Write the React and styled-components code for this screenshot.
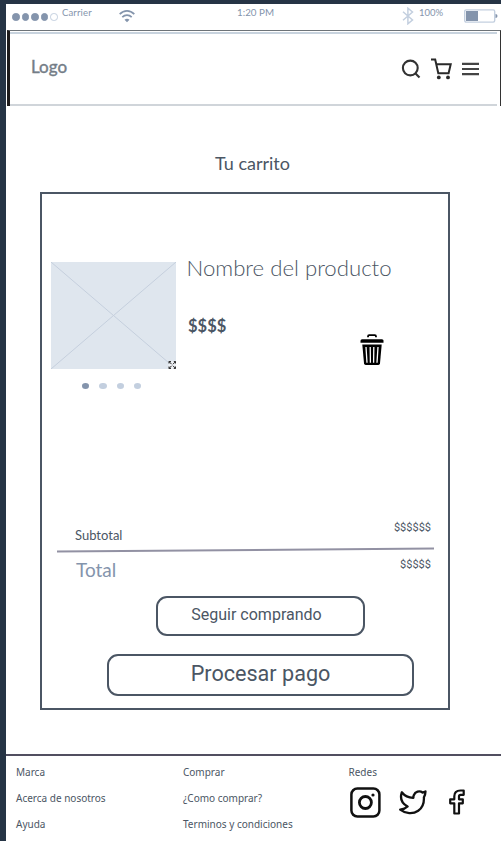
import React from 'react';
import styled, { createGlobalStyle } from 'styled-components';

const ink = '#4b5664';
const slate = '#8494ac';
const mist = '#c3cfdf';

const GlobalStyle = createGlobalStyle`
  *, *::before, *::after { box-sizing: border-box; }
  body { margin: 0; background: #263445; overflow: hidden; }
  h1, h2, p, ul { margin: 0; padding: 0; }
  ul { list-style: none; }
  svg { display: block; flex: none; }
`;

const Screen = styled.div`
  display: flex;
  flex-direction: column;
  width: 495px;
  height: 837px;
  margin: 4px 0 0 6px;
  background: #fff;
  color: ${ink};
  font-family: Lato, sans-serif;
  white-space: nowrap;
`;

const StatusBar = styled.div`
  display: grid;
  grid-template-columns: 56px 57px 118px 165px 17px 45px 1fr;
  height: 26px;
  color: ${slate};
`;

const Signal = styled.div`
  display: flex;
  gap: 2px;
  padding: 9px 0 0 6px;
`;

const SignalDot = styled.i`
  width: 7.5px;
  height: 7.5px;
  border-radius: 50%;
  border: 1px solid ${(p) => (p.$empty ? mist : slate)};
  background: ${(p) => (p.$empty ? 'transparent' : slate)};
`;

const StatusText = styled.span`
  font-size: ${(p) => p.$size}px;
  line-height: 17px;
  letter-spacing: ${(p) => p.$tracking || 0}px;
`;

const StatusIcon = styled.div`
  padding-top: ${(p) => p.$top}px;
`;

const Header = styled.header`
  display: flex;
  align-items: center;
  justify-content: space-between;
  height: 76px;
  margin-left: 1px;
  padding: 1px 21px 0 20px;
  border-left: 3px solid #1f1c1c;
  border-right: 1px solid #333;
  border-top: 1px solid #6d7378;
  background:
    linear-gradient(#c8d3de, #c8d3de) 0 1px / calc(100% - 3px) 2px no-repeat,
    linear-gradient(#d0d5da, #d0d5da) 0 100% / calc(100% - 3px) 2px no-repeat;
`;

const Logo = styled.h1`
  margin: -5px 0 0 1px;
  font-size: 17px;
  font-weight: 400;
  line-height: 22px;
  color: #747d87;
  -webkit-text-stroke: 0.4px #747d87;
`;

const HeaderIcons = styled.nav`
  display: flex;
  align-items: center;
  gap: 10px;
`;

const Main = styled.main`
  display: flex;
  flex-direction: column;
  height: 648px;
  padding: 46px 51px 0 34px;
`;

const Title = styled.h2`
  margin-left: 175px;
  font-size: 18px;
  font-weight: 400;
  line-height: 22px;
`;

const Card = styled.section`
  display: flex;
  flex-direction: column;
  width: 410px;
  height: 518px;
  margin-top: 18px;
  padding: 67px 14px 0 9px;
  border: 2px solid ${ink};
`;

const Product = styled.article`
  display: grid;
  grid-template-columns: 126px 172px 1fr;
  height: 257px;
`;

const Thumb = styled.div`
  width: 125px;
  height: 107px;
  margin-top: 0.5px;
  background: #dfe6ee;
`;

const Dots = styled.div`
  display: flex;
  gap: 10px;
  padding: 14px 0 0 31px;
`;

const Dot = styled.i`
  width: 7.3px;
  height: 6px;
  border-radius: 50%;
  background: ${(p) => (p.$active ? slate : mist)};
`;

const ProductName = styled.p`
  margin: -9px 0 0 9.5px;
  font-size: 22.2px;
  font-weight: 300;
  line-height: 31px;
`;

const Price = styled.p`
  margin: 31px 0 0 11px;
  font-size: 16.5px;
  font-weight: 700;
  line-height: 24px;
`;

const RemoveButton = styled.div`
  padding: 73px 0 0 11px;
`;

const SummaryRow = styled.div`
  display: flex;
  justify-content: space-between;
  height: ${(p) => p.$height}px;
  padding: 0 3px 0 ${(p) => p.$inset}px;
`;

const Label = styled.span`
  margin-top: ${(p) => p.$top}px;
  font-size: ${(p) => p.$size}px;
  line-height: 24px;
  color: ${(p) => p.$color || ink};
`;

const Amount = styled.span`
  margin-top: ${(p) => p.$top}px;
  font-family: Roboto, sans-serif;
  font-size: 11px;
  line-height: 16px;
`;

const Rule = styled.div`
  width: 377px;
  height: 1.6px;
  margin: 0 0 0 6px;
  flex: none;
  background: #9291a3;
  transform: rotate(-0.42deg);
`;

const Button = styled.button`
  flex: none;
  width: ${(p) => p.$width}px;
  height: ${(p) => p.$height}px;
  margin: ${(p) => p.$margin};
  padding: 0 ${(p) => p.$shift}px 2px 0;
  border: 2px solid ${ink};
  border-radius: 11px;
  background: #fff;
  color: ${ink};
  font-family: Roboto, sans-serif;
  font-size: ${(p) => p.$size}px;
  line-height: 1;
`;

const Footer = styled.footer`
  display: grid;
  grid-template-columns: 167px 165.5px 1fr;
  flex: 1;
  padding: 3px 0 0 10px;
  border-top: 2px solid #514f60;
  font-family: 'Noto Sans', sans-serif;
  font-size: 10px;
`;

const FooterLink = styled.li`
  height: 26.2px;
  line-height: 26px;
`;

const SocialRow = styled.div`
  display: flex;
  align-items: center;
  height: 34px;
`;

const SearchIcon = () => (
  <svg width="20" height="20" viewBox="0 0 20 20" fill="none" stroke="#333" strokeWidth="2.1">
    <circle cx="9.3" cy="9" r="7.4" />
    <path d="M14.3 14.2 18.5 18.5" />
  </svg>
);

const CartIcon = () => (
  <svg width="21" height="22" viewBox="0 0 21 22" fill="none" stroke="#292929" strokeWidth="2">
    <path d="M0 1.6H4.2L7.3 15.2H17.6L19.7 6.3H5.4" />
    <circle cx="7.8" cy="19.4" r="1.9" fill="#292929" stroke="none" />
    <circle cx="17" cy="19.4" r="1.9" fill="#292929" stroke="none" />
  </svg>
);

const MenuIcon = () => (
  <svg width="17" height="14" viewBox="0 0 17 14" stroke="#444" strokeWidth="2.2">
    <path d="M0 1.8H17M0 7H17M0 12.2H17" />
  </svg>
);

const WifiIcon = () => (
  <svg width="16" height="13" viewBox="0 0 16 13" fill="none" stroke={slate} strokeWidth="1.7">
    <path d="M.7 4.2C5-.2 11-.2 15.3 4.2M3.3 7.2C6 4.5 10 4.5 12.7 7.2" />
    <path d="M5.5 9.7Q8 7.6 10.5 9.7L8 12.3Z" fill={slate} stroke="none" />
  </svg>
);

const BluetoothIcon = () => (
  <svg width="12" height="18" viewBox="0 0 12 18" fill="none" stroke={mist} strokeWidth="1.5">
    <path d="M1 4.8 10.5 13 5.9 16.8V1.2L10.5 5 1 13.2" />
  </svg>
);

const BatteryIcon = () => (
  <svg width="34" height="14" viewBox="0 0 34 14">
    <rect x=".7" y=".9" width="30" height="12.2" rx="1.5" fill="none" stroke={mist} strokeWidth="1.4" />
    <rect x="2" y="2" width="12" height="10" fill={slate} />
    <path d="M31.5 5Q33.5 5 33.5 7T31.5 9Z" fill={slate} />
  </svg>
);

const CrossedBox = () => (
  <svg width="125" height="107" viewBox="0 0 125 107" fill="none">
    <path d="M0 0 125 107M0 107 125 0" stroke="#c5cfdd" />
    <rect x="117.5" y="99" width="7.5" height="8" fill="#eef1f5" />
    <g stroke="#222" strokeWidth="1">
      <path d="M118 101.5V99.6H120M122.8 99.6H124.6V101.5M118 104.5V106.4H120M122.8 106.4H124.6V104.5" />
      <path d="M118 99.6 120.6 102.2M124.6 99.6 122 102.2M118 106.4 120.6 103.8M124.6 106.4 122 103.8" />
    </g>
  </svg>
);

const TrashIcon = () => (
  <svg width="24" height="31" viewBox="0 0 24 31" fill="none">
    <path d="M8 3.2V2.4Q8 1.2 9.2 1.2H14.8Q16 1.2 16 2.4V3.2" stroke="#000" strokeWidth="1.8" />
    <path d="M2 5.2H22Q23.5 5.2 23.5 6.8V8.8H.5V6.8Q.5 5.2 2 5.2Z" fill="#000" />
    <path d="M2.3 10.5H21.7L20 29.2Q19.8 31 18.3 31H5.7Q4.2 31 4 29.2Z" fill="#000" />
    <path d="M6 13 7 28.8M10.2 13 10.4 28.8M13.8 13 13.6 28.8M18 13 17 28.8" stroke="#fff" strokeWidth="1.3" />
  </svg>
);

const InstagramIcon = () => (
  <svg width="31" height="31" viewBox="0 0 31 31" fill="none" stroke="#111" strokeWidth="2.5">
    <rect x="1.4" y="1.5" width="28" height="28" rx="6" />
    <circle cx="15.4" cy="15.5" r="6" strokeWidth="2.8" />
    <circle cx="23" cy="8" r="1.6" fill="#111" stroke="none" />
  </svg>
);

const TwitterIcon = () => (
  <svg width="28" height="25" viewBox="0 0 28 25" fill="none" stroke="#111" strokeWidth="2.3" strokeLinejoin="round">
    <path d="M26.5 1.5Q25.3 2.3 23.5 2.5C20.5.3 16.2 1.7 14.8 5.2Q14.3 6.5 14.4 7.8C9.5 7.9 5.7 6 2.8 2.3C1 8 2.3 13.3 8.6 16.5C6.7 18.4 4.2 19.3 1.2 19.6C6.5 23.7 13.8 24.4 19.2 20.7C23.5 17.8 25.2 13 24.9 7.4Q26.4 5 26.5 1.5Z" />
  </svg>
);

const FacebookIcon = () => (
  <svg width="16" height="26" viewBox="0 0 16 26" fill="none" stroke="#111" strokeWidth="2.2" strokeLinejoin="round">
    <path d="M14.7 1.5H11.5Q5.3 1.5 5.3 7.3V10.3H1.2V14.3H5.3V24.5H10V14.3H13.8V10.3H10V7.2Q10 5.8 11.6 5.8H14.7Z" />
  </svg>
);

const SocialLink = styled.span`
  margin: ${(p) => p.$margin};
`;

export default function App() {
  return (
    <>
      <GlobalStyle />
      <Screen>
        <StatusBar>
          <Signal>
            {[0, 1, 2, 3, 4].map((n) => <SignalDot key={n} $empty={n === 4} />)}
          </Signal>
          <StatusText $size={9.5} $tracking={0.15}>Carrier</StatusText>
          <StatusIcon $top={6}><WifiIcon /></StatusIcon>
          <StatusText $size={9.8}>1:20 PM</StatusText>
          <StatusIcon $top={3}><BluetoothIcon /></StatusIcon>
          <StatusText $size={9.5}>100%</StatusText>
          <StatusIcon $top={5}><BatteryIcon /></StatusIcon>
        </StatusBar>
        <Header>
          <Logo>Logo</Logo>
          <HeaderIcons>
            <SearchIcon /><CartIcon /><MenuIcon />
          </HeaderIcons>
        </Header>
        <Main>
          <Title>Tu carrito</Title>
          <Card>
            <Product>
              <div>
                <Thumb><CrossedBox /></Thumb>
                <Dots>{[0, 1, 2, 3].map((n) => <Dot key={n} $active={n === 0} />)}</Dots>
              </div>
              <div>
                <ProductName>Nombre del producto</ProductName>
                <Price>$$$$</Price>
              </div>
              <RemoveButton><TrashIcon /></RemoveButton>
            </Product>
            <SummaryRow $height={31} $inset={24}>
              <Label $size={13} $top={5}>Subtotal</Label>
              <Amount $top={2}>$$$$$$</Amount>
            </SummaryRow>
            <Rule />
            <SummaryRow $height={45.4} $inset={25}>
              <Label $size={19} $top={7} $color={slate}>Total</Label>
              <Amount $top={6}>$$$$$</Amount>
            </SummaryRow>
            <Button $width={209} $height={40} $margin="0 0 0 105px" $shift={8} $size={16}>Seguir comprando</Button>
            <Button $width={307} $height={42} $margin="18px 0 0 56px" $shift={0} $size={21.6}>Procesar pago</Button>
          </Card>
        </Main>
        <Footer>
          <ul>
            <FooterLink>Marca</FooterLink>
            <FooterLink>Acerca de nosotros</FooterLink>
            <FooterLink>Ayuda</FooterLink>
          </ul>
          <ul>
            <FooterLink>Comprar</FooterLink>
            <FooterLink>¿Como comprar?</FooterLink>
            <FooterLink>Terminos y condiciones</FooterLink>
          </ul>
          <div>
            <ul><FooterLink>Redes</FooterLink></ul>
            <SocialRow>
              <SocialLink $margin="0 18px 0 1px"><InstagramIcon /></SocialLink>
              <SocialLink $margin="0 22px 0 0"><TwitterIcon /></SocialLink>
              <FacebookIcon />
            </SocialRow>
          </div>
        </Footer>
      </Screen>
    </>
  );
}
